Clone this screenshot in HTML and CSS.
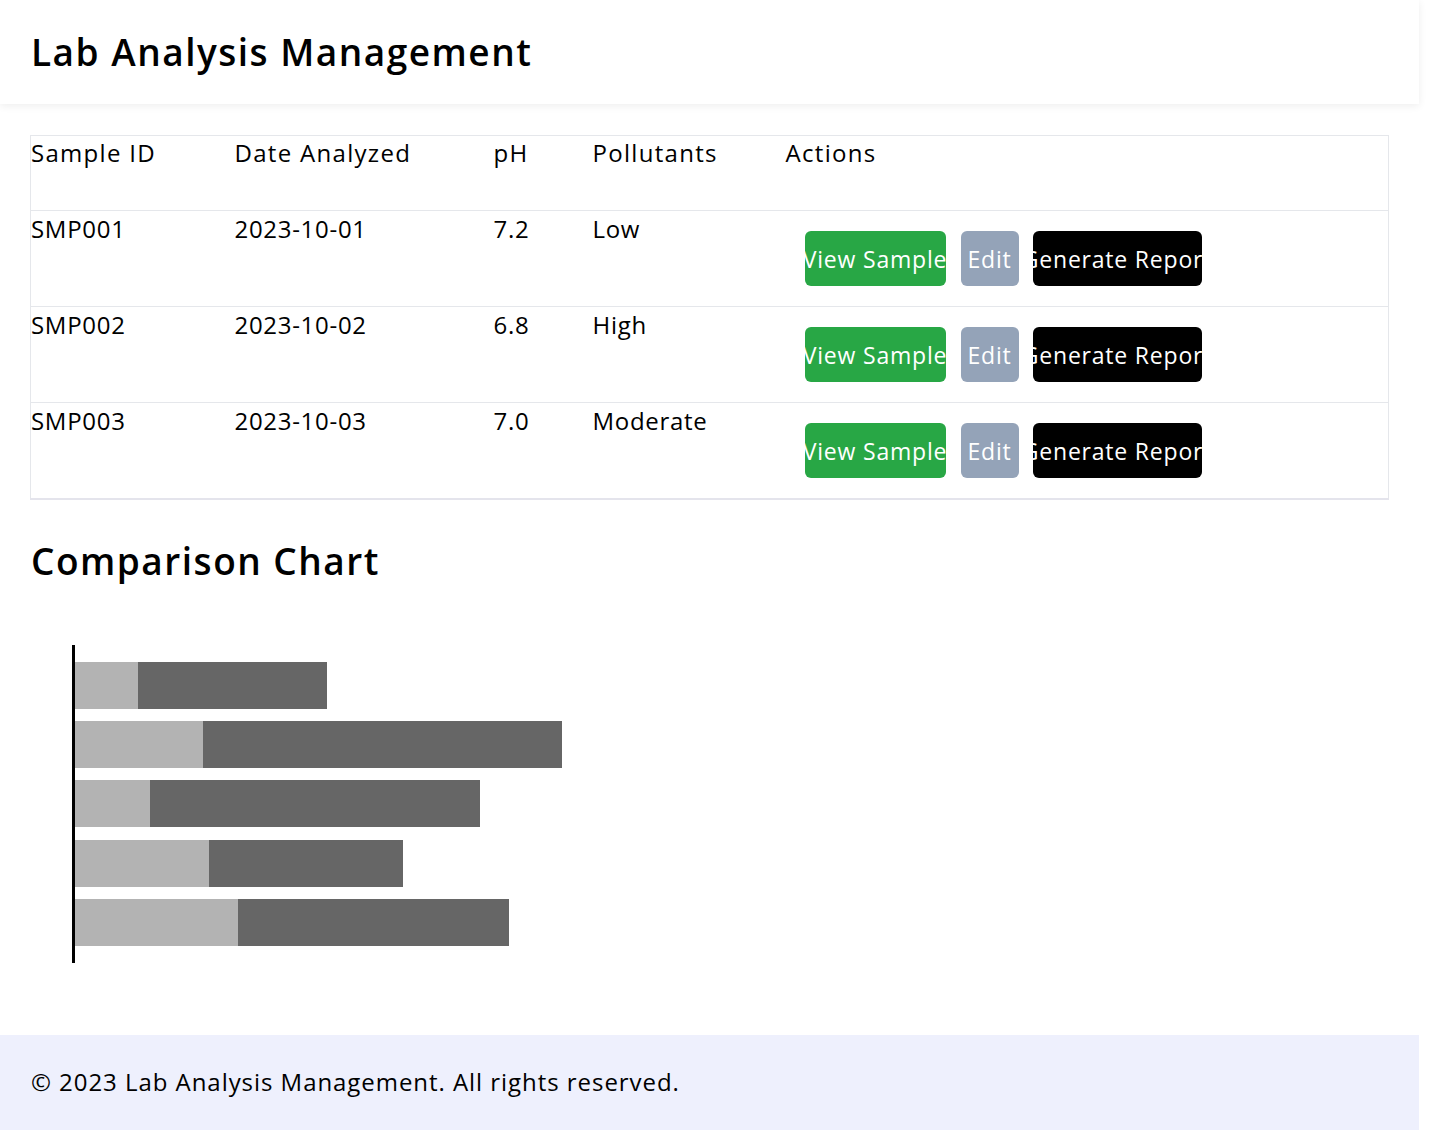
FILE: index.html
```html
<!DOCTYPE html>
<html lang="en">
<head>
<meta charset="utf-8">
<title>Lab Analysis Management</title>
<link rel="stylesheet" href="styles.css">
</head>
<body>
<div class="page">
  <header class="topbar">
    <h1 class="title">Lab Analysis Management</h1>
  </header>
  <main class="content">
    <table class="samples">
      <colgroup>
        <col class="c-id"><col class="c-date"><col class="c-ph"><col class="c-pol"><col class="c-act">
      </colgroup>
      <thead>
        <tr><th>Sample ID</th><th>Date Analyzed</th><th>pH</th><th>Pollutants</th><th>Actions</th></tr>
      </thead>
      <tbody>
        <tr>
          <td>SMP001</td><td>2023-10-01</td><td>7.2</td><td>Low</td>
          <td><div class="actions"><button class="btn btn-view">View Sample</button><button class="btn btn-edit">Edit</button><button class="btn btn-report">Generate Report</button></div></td>
        </tr>
        <tr>
          <td>SMP002</td><td>2023-10-02</td><td>6.8</td><td>High</td>
          <td><div class="actions"><button class="btn btn-view">View Sample</button><button class="btn btn-edit">Edit</button><button class="btn btn-report">Generate Report</button></div></td>
        </tr>
        <tr>
          <td>SMP003</td><td>2023-10-03</td><td>7.0</td><td>Moderate</td>
          <td><div class="actions"><button class="btn btn-view">View Sample</button><button class="btn btn-edit">Edit</button><button class="btn btn-report">Generate Report</button></div></td>
        </tr>
      </tbody>
    </table>

    <h2 class="section-title">Comparison Chart</h2>
    <svg class="chart" width="600" height="340" viewBox="0 0 600 340">
      <g>
        <rect x="44" y="32" width="63" height="47" fill="#b3b3b3"/>
        <rect x="107" y="32" width="189" height="47" fill="#666666"/>
        <rect x="44" y="91" width="128" height="47" fill="#b3b3b3"/>
        <rect x="172" y="91" width="359" height="47" fill="#666666"/>
        <rect x="44" y="150" width="75" height="47" fill="#b3b3b3"/>
        <rect x="119" y="150" width="330" height="47" fill="#666666"/>
        <rect x="44" y="210" width="134" height="47" fill="#b3b3b3"/>
        <rect x="178" y="210" width="194" height="47" fill="#666666"/>
        <rect x="44" y="269" width="163" height="47" fill="#b3b3b3"/>
        <rect x="207" y="269" width="271" height="47" fill="#666666"/>
      </g>
      <rect x="41" y="15" width="3" height="318" fill="#000"/>
    </svg>
  </main>
  <footer class="footer">
    <p class="footer-text">© 2023 Lab Analysis Management. All rights reserved.</p>
  </footer>
</div>
</body>
</html>
```

FILE: styles.css
```css
html, body {
  margin: 0;
  padding: 0;
  background: #ffffff;
}

body {
  font-family: "Open Sans", "Noto Sans", sans-serif;
  color: #000000;
  font-size: 24px;
}

.page {
  width: 1419px;
}

.topbar {
  height: 104px;
  padding: 0 31px;
  display: flex;
  align-items: center;
  background: #ffffff;
  box-shadow: 0 2px 8px rgba(0, 0, 0, 0.07);
  position: relative;
}

.title {
  margin: 0;
  font-size: 37px;
  font-weight: 600;
  letter-spacing: 1.5px;
  line-height: 1.2;
}

.content {
  padding: 31px 30px 0 30px;
}

.samples {
  width: 1359px;
  border-collapse: collapse;
  border: 1px solid #e5e7eb;
  border-bottom: 2px solid #e4e4ec;
  table-layout: fixed;
}

.c-id { width: 204px; }
.c-date { width: 259px; }
.c-ph { width: 99px; }
.c-pol { width: 193px; }

.samples th,
.samples td {
  text-align: left;
  vertical-align: top;
  padding: 0;
  font-size: 24px;
  line-height: 36px;
  letter-spacing: 0.7px;
}

.samples th {
  font-weight: 500;
  letter-spacing: 1.3px;
  line-height: 34px;
  height: 74px;
}

.samples tbody tr {
  border-top: 1px solid #e5e7eb;
}

.samples td {
  height: 95px;
}

.actions {
  display: flex;
  gap: 15px;
  padding: 20px 0 0 19px;
}

.btn {
  display: inline-flex;
  align-items: center;
  justify-content: center;
  height: 55px;
  padding: 0;
  border: none;
  border-radius: 6px;
  color: #ffffff;
  font-family: inherit;
  font-size: 23px;
  font-weight: 500;
  letter-spacing: 0.8px;
  white-space: nowrap;
  overflow: hidden;
}

.btn-view { width: 141px; background: #28a745; }
.btn-edit { width: 58px; background: #94a3b8; }
.btn-report { width: 169px; background: #000000; margin-left: -1px; }

.section-title {
  margin: 39px 0 0 1px;
  font-size: 37px;
  font-weight: 600;
  letter-spacing: 1.5px;
  line-height: 1.2;
}

.chart {
  display: block;
  margin: 47px 0 0 1px;
}

.footer {
  margin-top: 65px;
  background: #eef0fd;
  padding: 27px 31px 30px;
}

.footer-text {
  margin: 0;
  font-size: 24px;
  line-height: 40px;
  letter-spacing: 0.95px;
}
```
